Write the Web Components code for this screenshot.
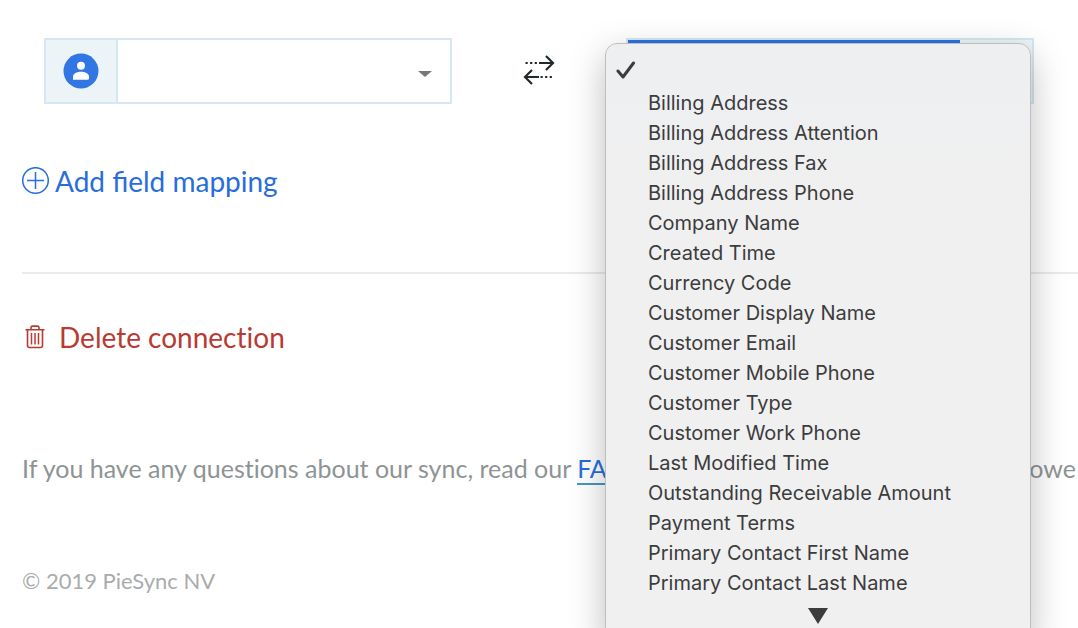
<!DOCTYPE html>
<html lang="en">
<head>
<meta charset="utf-8">
<meta name="viewport" content="width=device-width, initial-scale=1">
<title>Field mapping</title>
<style>
  body { margin: 0; background: #fff; font-family: Lato, "Liberation Sans", sans-serif; }
</style>
</head>
<body>
<sync-page>
  <mapping-row>
    <field-box slot="source" label="Contact field"></field-box>
    <field-box slot="target" label="Customer field" reverse>
      <option-menu slot="menu">
        <menu-option selected></menu-option>
        <menu-option>Billing Address</menu-option>
        <menu-option>Billing Address Attention</menu-option>
        <menu-option>Billing Address Fax</menu-option>
        <menu-option>Billing Address Phone</menu-option>
        <menu-option>Company Name</menu-option>
        <menu-option>Created Time</menu-option>
        <menu-option>Currency Code</menu-option>
        <menu-option>Customer Display Name</menu-option>
        <menu-option>Customer Email</menu-option>
        <menu-option>Customer Mobile Phone</menu-option>
        <menu-option>Customer Type</menu-option>
        <menu-option>Customer Work Phone</menu-option>
        <menu-option>Last Modified Time</menu-option>
        <menu-option>Outstanding Receivable Amount</menu-option>
        <menu-option>Payment Terms</menu-option>
        <menu-option>Primary Contact First Name</menu-option>
        <menu-option>Primary Contact Last Name</menu-option>
      </option-menu>
    </field-box>
  </mapping-row>
  <action-button slot="actions">
    <svg slot="icon" width="28" height="28" viewBox="0 0 28 28" fill="none" stroke="currentColor" stroke-width="1.5" aria-hidden="true"><circle cx="13.500" cy="13.500" r="12.800"/><path d="M13.500 5v17M5 13.500h17"/></svg>
    Add field mapping
  </action-button>
  <action-button slot="danger" danger>
    <svg slot="icon" width="28" height="28" viewBox="0 0 28 28" fill="none" stroke="currentColor" stroke-width="1.6" stroke-linejoin="round" aria-hidden="true"><path d="M3.500 6.800h19M9 6.500V4.700q0-1.600 1.600-1.600h4.800q1.600 0 1.600 1.600V6.500M5.500 7V22.500q0 2 2 2h11q2 0 2-2V7"/><path d="M9.500 10v11.500M13 10v11.500M16.500 10v11.500" stroke-width="1.500"/></svg>
    Delete connection
  </action-button>
  <help-line slot="help"></help-line>
  <span slot="legal">© 2019 PieSync NV</span>
</sync-page>

<script>
const define = (name, html, setup) => {
  const template = document.createElement('template');
  template.innerHTML = html;
  customElements.define(name, class extends HTMLElement {
    constructor() {
      super();
      this.attachShadow({ mode: 'open' }).append(template.content.cloneNode(true));
    }
    connectedCallback() { if (setup) setup(this, this.shadowRoot); }
  });
};

define('sync-page', `
  <style>
    :host { display: block; height: 100vh; overflow: hidden; }
    main { padding: 38px 0 0 22px; }
    .actions { padding-top: 55px; }
    hr { border: 0; border-top: 2px solid #e9eaea; margin: 69px 0 0; }
    .danger { padding-top: 41px; }
    .help { padding-top: 92px; }
    footer { padding-top: 80px; font-size: 22px; line-height: 32px; color: #a9acac; }
  </style>
  <main>
    <slot></slot>
    <div class="actions"><slot name="actions"></slot></div>
    <hr>
    <div class="danger"><slot name="danger"></slot></div>
    <div class="help"><slot name="help"></slot></div>
    <footer><slot name="legal"></slot></footer>
  </main>`);

define('mapping-row', `
  <style>
    :host { display: grid; grid-template-columns: minmax(0, 1fr) 174px minmax(0, 1fr); align-items: center; margin: 0 44px 0 22px; }
    svg { display: block; justify-self: center; }
  </style>
  <slot name="source"></slot>
  <svg width="32" height="32" viewBox="0 0 32 32" fill="none" stroke="#22292d" stroke-width="2.200" role="img" aria-label="Syncs both ways">
    <path d="M16 8h14M23 1l7 7-7 7M16 22H2M9 15l-7 7 7 7"/>
    <path d="M2.500 8h12M17.500 22h12" stroke-dasharray="2.200 2.400"/>
  </svg>
  <slot name="target"></slot>`);

define('field-box', `
  <style>
    :host { display: block; position: relative; }
    .box { display: flex; height: 62px; border: 2px solid #d5e7f1; background: #fff; }
    .badge { flex: none; width: 70px; display: grid; place-items: center; background: #ecf4f8; border-right: 2px solid #d5e7f1; }
    .control { flex: 1; min-width: 0; display: grid; align-items: center; }
    select { grid-area: 1 / 1; width: 100%; height: 100%; appearance: none; border: 0; border-radius: 0; background: transparent; outline: 0; }
    .caret { grid-area: 1 / 1; justify-self: end; margin: 6px 18px 0 0; pointer-events: none; }
    :host([reverse]) .box { flex-direction: row-reverse; }
    :host([reverse]) .badge { border-right: 0; width: 72px; }
    :host([reverse]) select { border: 4px solid #2a72e4; }
  </style>
  <div class="box">
    <div class="badge">
      <svg width="36" height="36" viewBox="0 0 36 36" aria-hidden="true"><circle cx="18" cy="18" r="17.500" fill="#3276e3"/><g fill="#fff"><circle cx="18" cy="12.700" r="4"/><path d="M10 26.800v-3c0-3.300 4-5 8-5s8 1.700 8 5v1.500q0 1.500-1.500 1.500z"/></g></svg>
    </div>
    <div class="control">
      <select><option></option></select>
      <svg class="caret" width="14" height="6" viewBox="0 0 14 6" aria-hidden="true"><path d="M0 0h14L7 6z" fill="#777"/></svg>
    </div>
  </div>
  <slot name="menu"></slot>`,
  (host, root) => root.querySelector('select').setAttribute('aria-label', host.getAttribute('label')));

define('option-menu', `
  <style>
    :host { display: block; position: absolute; z-index: 1; top: 5px; left: -21px; right: 3px; box-sizing: border-box;
      padding: 8px 0; border: 1px solid #bcbec0; border-radius: 12px; background: linear-gradient(#eeeff1, #f0f0f0 200px);
      box-shadow: 0 12px 36px rgba(0, 0, 0, .26);
      font: 20px/30px Inter, "Liberation Sans", sans-serif; color: #3c3c3d; }
    .more { display: grid; place-items: center; height: 36px; }
  </style>
  <slot></slot>
  <div class="more"><svg width="20" height="16" viewBox="0 0 20 16" aria-hidden="true"><path d="M0 0h20L10 16z" fill="#3c3c3d"/></svg></div>`,
  host => host.setAttribute('role', 'listbox'));

define('menu-option', `
  <style>
    :host { display: flex; align-items: center; min-height: 30px; padding-left: 42px; white-space: nowrap; }
    :host([selected]) { min-height: 36px; padding-left: 10px; }
    svg { display: none; }
    :host([selected]) svg { display: block; }
  </style>
  <svg width="20" height="18" viewBox="0 0 20 18" fill="none" stroke="#3c3c3d" stroke-width="3" stroke-linecap="round" stroke-linejoin="round" aria-hidden="true"><path d="M2 10l5 6L17.500 2"/></svg>
  <slot></slot>`,
  host => {
    host.setAttribute('role', 'option');
    host.setAttribute('aria-selected', host.hasAttribute('selected'));
  });

define('action-button', `
  <style>
    :host { display: block; color: #276ddb; }
    :host([danger]) { color: #b93a32; font-variant-ligatures: none; }
    button { display: flex; align-items: center; gap: 5px; padding: 0; border: 0; background: none; color: inherit; font: 28px/44px Lato, "Liberation Sans", sans-serif; cursor: pointer; }
    :host([danger]) button { gap: 9px; font-variant-ligatures: none; }
  </style>
  <button type="button"><slot name="icon"></slot><span><slot></slot></span></button>`);

define('help-line', `
  <style>
    :host { display: flex; justify-content: space-between; padding-right: 2px; font-size: 25px; line-height: 34px; color: #8e9494; white-space: nowrap; font-variant-ligatures: none; }
    a { color: #276ddb; text-decoration: none; border-bottom: 2px solid #4497c5; }
  </style>
  <span>If you have any questions about our sync, read our <a href="#faq">FAQ</a></span>
  <span>owe</span>`);
</script>
</body>
</html>
